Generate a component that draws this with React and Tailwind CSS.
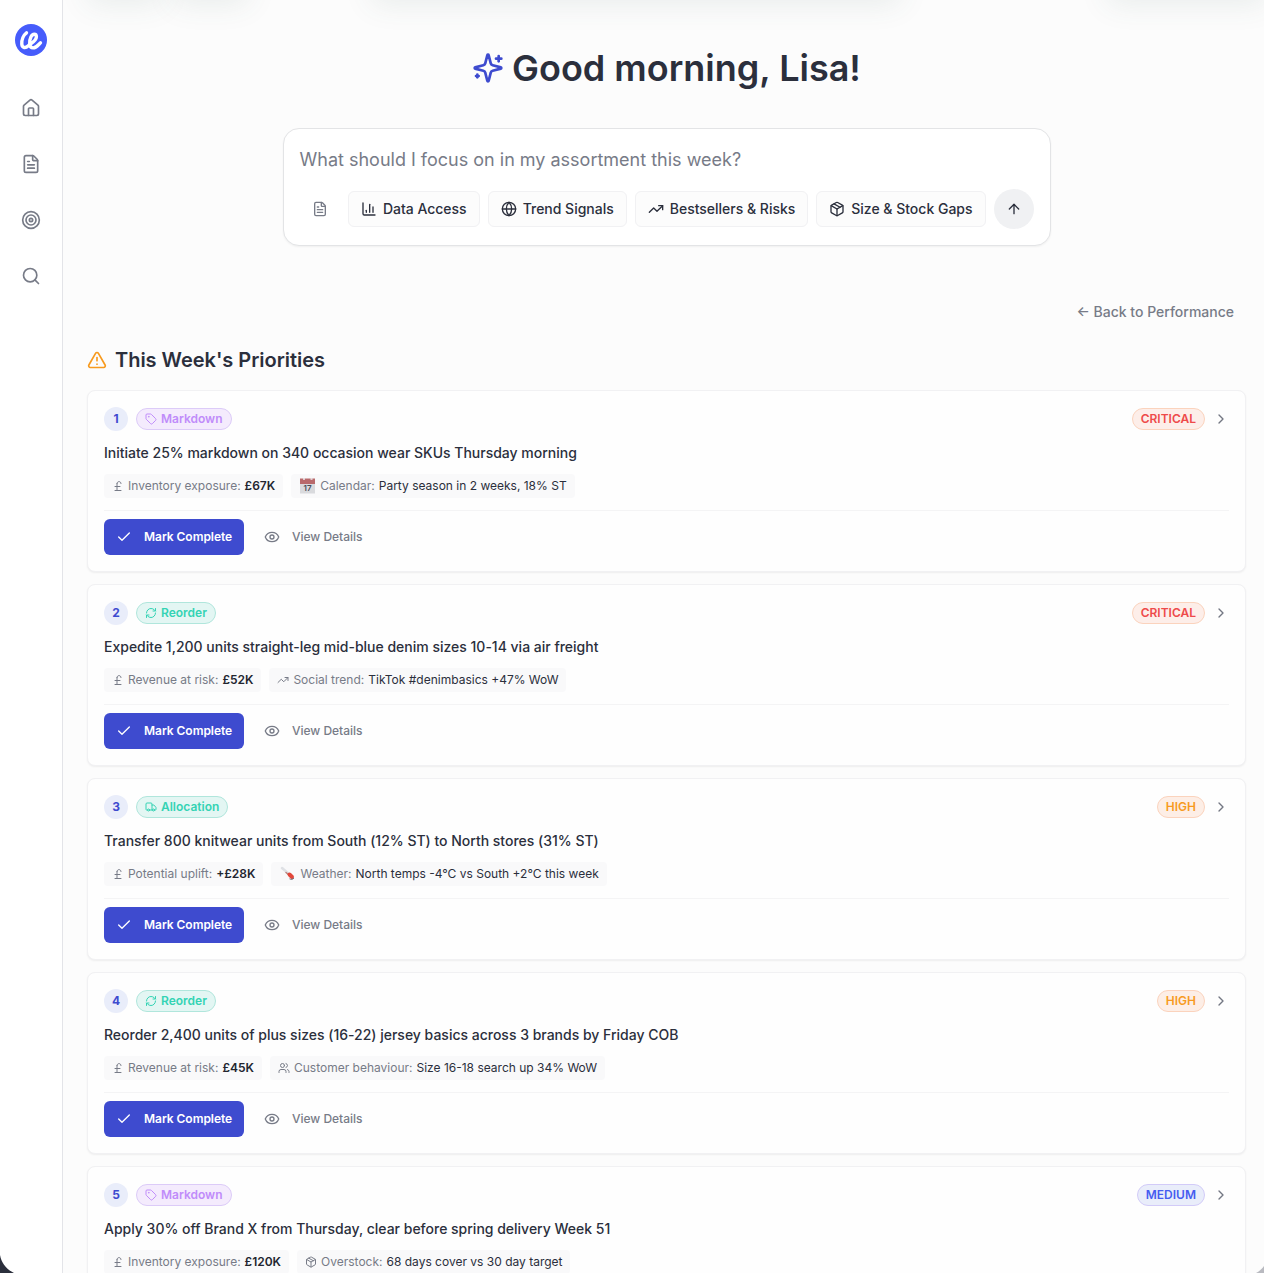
import React from 'react';
import {
  ArrowUp,
  ChartColumn,
  Check,
  ChevronRight,
  Eye,
  FileText,
  Globe,
  House,
  Package,
  PoundSterling,
  RefreshCw,
  Search,
  Tag,
  Target,
  TrendingUp,
  TriangleAlert,
  Truck,
  Users
} from 'lucide-react';

const CalendarEmoji = () => (
  <svg width="17" height="16" viewBox="0 0 17 16">
    <rect x="1" y="1" width="15" height="14.5" fill="#d9dadd" />
    <path d="M1 0.5h15v5.500H1z" fill="#b96a6c" />
    <path d="M4 0.300h2v1.500H4zM11.500 0.300h2v1.500h-2z" fill="#ececef" />
    <text x="8.5" y="13" textAnchor="middle" fontSize="8" fontWeight="600" fill="#4a4d57">17</text>
  </svg>
);

const ThermometerEmoji = () => (
  <svg width="17" height="16" viewBox="0 0 17 16">
    <path d="M3 2l7 6" stroke="#dfe1e5" strokeWidth="2.5" strokeLinecap="round" />
    <path d="M7 6.500l4 3.500" stroke="#b9857f" strokeWidth="1.5" strokeLinecap="round" />
    <path d="M10.500 8.500l2.500 2.500" stroke="#e2473a" strokeWidth="4" strokeLinecap="round" />
    <path d="M10.500 12.800c1.500 1 3.500 .6 4.500-.8" stroke="#6d6f7a" strokeWidth="1" fill="none" />
  </svg>
);

const Sparkles = ({ className }) => (
  <svg
    className={className}
    width="32"
    height="32"
    viewBox="0 0 24 24"
    fill="none"
    stroke="currentColor"
    strokeWidth="2"
    strokeLinecap="round"
    strokeLinejoin="round"
  >
    <path d="M9.937 15.5A2 2 0 0 0 8.5 14.063l-6.135-1.582a.5.5 0 0 1 0-.962L8.5 9.936A2 2 0 0 0 9.937 8.5l1.582-6.135a.5.5 0 0 1 .963 0L14.063 8.5A2 2 0 0 0 15.5 9.937l6.135 1.581a.5.5 0 0 1 0 .964L15.5 14.063a2 2 0 0 0-1.437 1.437l-1.582 6.135a.5.5 0 0 1-.963 0z" />
    <path d="M20 3v4" />
    <path d="M22 5h-4" />
    <path d="M4 17v2" />
    <path d="M5 18H3" />
  </svg>
);

const Logo = () => (
  <svg width="32" height="32" viewBox="0 0 32 32">
    <circle cx="16" cy="16" r="16" fill="#465cfb" />
    <path
      d="M11.500 8.800C8.500 11 6.500 16 6.800 20.200C7.100 24.400 10.800 24.200 13 22C16 19.500 21.400 17 21.400 12.800C21.400 9.400 17.600 9.300 16 12.800C14 17.200 13.800 23.800 18 23.900C21.500 24 23.200 20.800 25.500 18.800"
      fill="none"
      stroke="#fff"
      strokeWidth="3.400"
      strokeLinecap="round"
      strokeLinejoin="round"
    />
  </svg>
);

const navItems = [House, FileText, Target, Search];

const prompts = [
  { icon: ChartColumn, label: 'Data Access' },
  { icon: Globe, label: 'Trend Signals' },
  { icon: TrendingUp, label: 'Bestsellers & Risks' },
  { icon: Package, label: 'Size & Stock Gaps' }
];

const typeStyles = {
  Markdown: { icon: Tag, className: 'bg-[#f4ebfd] border-[#dccbf8] text-[#c08cfa]' },
  Reorder: { icon: RefreshCw, className: 'bg-[#e3f6f3] border-[#b0e6dc] text-[#34d3b4]' },
  Allocation: { icon: Truck, className: 'bg-[#e3f6f3] border-[#b0e6dc] text-[#34d3b4]' }
};

const levelStyles = {
  CRITICAL: 'bg-[#fdeee9] border-[#fbd3bd] text-[#ee4a4a]',
  HIGH: 'bg-[#fdeee6] border-[#fbd3bd] text-[#f79a1e]',
  MEDIUM: 'bg-[#e9edfa] border-[#d2cbf8] text-[#465cf0]'
};

const priorities = [
  {
    type: 'Markdown',
    level: 'CRITICAL',
    title: 'Initiate 25% markdown on 340 occasion wear SKUs Thursday morning',
    metric: 'Inventory exposure:',
    value: '£67K',
    signalIcon: <CalendarEmoji />,
    signal: 'Calendar:',
    detail: 'Party season in 2 weeks, 18% ST'
  },
  {
    type: 'Reorder',
    level: 'CRITICAL',
    title: 'Expedite 1,200 units straight-leg mid-blue denim sizes 10-14 via air freight',
    metric: 'Revenue at risk:',
    value: '£52K',
    signalIcon: <TrendingUp size={12} />,
    signal: 'Social trend:',
    detail: 'TikTok #denimbasics +47% WoW'
  },
  {
    type: 'Allocation',
    level: 'HIGH',
    title: 'Transfer 800 knitwear units from South (12% ST) to North stores (31% ST)',
    metric: 'Potential uplift:',
    value: '+£28K',
    signalIcon: <ThermometerEmoji />,
    signal: 'Weather:',
    detail: 'North temps -4°C vs South +2°C this week'
  },
  {
    type: 'Reorder',
    level: 'HIGH',
    title: 'Reorder 2,400 units of plus sizes (16-22) jersey basics across 3 brands by Friday COB',
    metric: 'Revenue at risk:',
    value: '£45K',
    signalIcon: <Users size={12} />,
    signal: 'Customer behaviour:',
    detail: 'Size 16-18 search up 34% WoW'
  },
  {
    type: 'Markdown',
    level: 'MEDIUM',
    title: 'Apply 30% off Brand X from Thursday, clear before spring delivery Week 51',
    metric: 'Inventory exposure:',
    value: '£120K',
    signalIcon: <Package size={12} />,
    signal: 'Overstock:',
    detail: '68 days cover vs 30 day target'
  }
];

const PriorityCard = ({ item, index }) => {
  const { icon: TypeIcon, className } = typeStyles[item.type];

  return (
    <div className="shrink-0 rounded-lg border border-[#f1f1f3] bg-[#fefefe] p-4 shadow-[0_1px_2px_rgba(0,0,0,0.06)]">
      <div className="flex h-6 items-center justify-between">
        <div className="flex items-center gap-2">
          <span className="flex size-6 items-center justify-center rounded-full bg-[#e9edfa] text-xs font-bold text-[#3e4bcf]">
            {index + 1}
          </span>
          <span className={`flex h-[22px] items-center gap-1 rounded-full border px-2 text-xs font-semibold ${className}`}>
            <TypeIcon size={12} />
            {item.type}
          </span>
        </div>
        <div className="flex items-center gap-2">
          <span className={`flex h-[22px] items-center rounded-full border px-2 text-xs font-semibold ${levelStyles[item.level]}`}>
            {item.level}
          </span>
          <ChevronRight size={16} className="text-[#737783]" />
        </div>
      </div>

      <h3 className="mt-3 text-sm leading-5 font-medium tracking-[-0.005px] text-[#2b2f3c]">{item.title}</h3>

      <div className="mt-[11px] flex gap-2 text-xs text-[#777b87]">
        <div className="flex h-6 items-center gap-1 rounded bg-[#f9f9fa] px-2">
          <PoundSterling size={12} />
          <span>{item.metric}</span>
          <span className="font-semibold text-[#22252f]">{item.value}</span>
        </div>
        <div className="flex h-6 items-center gap-1 rounded bg-[#f9f9fa] px-2">
          {item.signalIcon}
          <span>{item.signal}</span>
          <span className="text-[#2b2f3c]">{item.detail}</span>
        </div>
      </div>

      <div className="mt-3 flex gap-2 border-t border-[#f4f4f5] pt-2 text-xs font-medium">
        <button className="flex h-9 w-[140px] items-center gap-3 rounded-md bg-[#3e4bcf] px-3 font-semibold tracking-[-0.04px] whitespace-nowrap text-white">
          <Check size={16} className="shrink-0" />
          Mark Complete
        </button>
        <button className="flex h-9 items-center gap-3 px-3 tracking-[-0.03px] text-[#777b87]">
          <Eye size={16} />
          View Details
        </button>
      </div>
    </div>
  );
};

const App = () => {
  return (
    <div className="relative flex h-[1273px] overflow-hidden bg-[#fcfcfc] font-['Inter',sans-serif] text-[#2b2f3c]">
      {/* Soft shadows of the panels scrolled off above */}
      <div className="absolute -top-12 left-[92px] h-8 w-[66px] shadow-[0_16px_30px_4px_rgba(60,100,85,0.10)]" />
      <div className="absolute -top-12 left-[178px] h-8 w-[66px] shadow-[0_16px_30px_4px_rgba(60,100,85,0.10)]" />
      <div className="absolute -top-12 left-[376px] h-8 w-[520px] shadow-[0_16px_30px_4px_rgba(60,100,85,0.10)]" />
      <div className="absolute -top-12 left-[1112px] h-8 w-[150px] shadow-[0_16px_30px_4px_rgba(60,100,85,0.10)]" />

      <aside className="relative flex w-[63px] shrink-0 flex-col items-center border-r border-[#e3e4e8] bg-white pt-6">
        <Logo />
        <nav className="mt-8 flex flex-col gap-4">
          {navItems.map((Icon, i) => (
            <button key={i} className="flex size-10 items-center justify-center text-[#777b87]">
              <Icon size={20} />
            </button>
          ))}
        </nav>
      </aside>

      <main className="relative flex min-w-0 flex-1 flex-col pr-[18px] pl-6">
        <h1 className="mt-12 flex h-10 items-center justify-center gap-2 text-4xl font-semibold">
          <Sparkles className="text-[#3e4bcf]" />
          Good morning, Lisa!
        </h1>

        {/* Prompt box */}
        <div className="mt-10 h-[118px] w-[768px] shrink-0 self-center rounded-2xl border border-[#e3e4e6] bg-white px-4 pt-[17px] shadow-[0_1px_2px_rgba(0,0,0,0.05)]">
          <p className="text-lg leading-7 text-[#777b87]">What should I focus on in my assortment this week?</p>
          <div className="mt-[15px] flex h-10 items-center justify-end gap-2">
            <button className="flex h-9 w-10 shrink-0 items-center justify-center text-[#777b87]">
              <FileText size={16} />
            </button>
            {prompts.map(({ icon: Icon, label }) => (
              <button
                key={label}
                className="flex h-9 items-center gap-1.5 rounded-md border border-[#f1f1f3] bg-[#fcfcfc] px-3 text-sm font-medium tracking-[-0.010px] whitespace-nowrap"
              >
                <Icon size={16} className="shrink-0" />
                {label}
              </button>
            ))}
            <button className="flex size-10 shrink-0 items-center justify-center rounded-full bg-[#f0f1f3]">
              <ArrowUp size={16} />
            </button>
          </div>
        </div>

        <button className="mt-14 mr-3 h-5 self-end text-sm leading-5 font-medium text-[#777b87]">← Back to Performance</button>

        <h2 className="mt-6 flex h-7 items-center gap-2 text-xl font-semibold tracking-[-0.02px]">
          <TriangleAlert size={20} className="text-[#f79a1e]" />
          This Week's Priorities
        </h2>

        <div className="mt-4 flex flex-col gap-3">
          {priorities.map((item, i) => (
            <PriorityCard key={item.title} item={item} index={i} />
          ))}
        </div>
      </main>

      {/* Window corners */}
      <svg className="absolute bottom-0 left-0" width="14" height="18" viewBox="0 0 14 18">
        <path d="M0 0C1.500 8 6 14 14 18H0z" fill="#2b2f3c" />
      </svg>
      <svg className="absolute right-0 bottom-0" width="8" height="7" viewBox="0 0 8 7">
        <path d="M8 0C6 3 3 5.500 0 7h8z" fill="#b9bac0" />
      </svg>
    </div>
  );
};

export default App;
